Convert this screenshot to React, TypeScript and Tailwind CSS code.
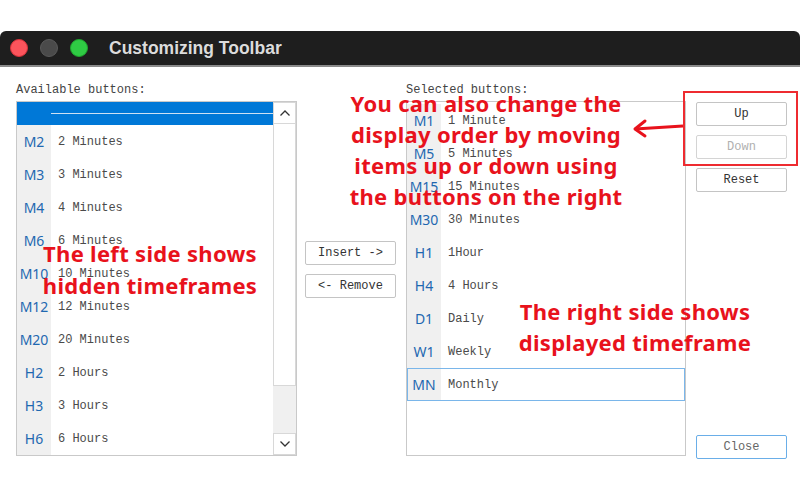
import React from "react";

type Item = { code: string; label: string };

const available: Item[] = [
  { code: "M2", label: "2 Minutes" },
  { code: "M3", label: "3 Minutes" },
  { code: "M4", label: "4 Minutes" },
  { code: "M6", label: "6 Minutes" },
  { code: "M10", label: "10 Minutes" },
  { code: "M12", label: "12 Minutes" },
  { code: "M20", label: "20 Minutes" },
  { code: "H2", label: "2 Hours" },
  { code: "H3", label: "3 Hours" },
  { code: "H6", label: "6 Hours" },
];

const selected: Item[] = [
  { code: "M1", label: "1 Minute" },
  { code: "M5", label: "5 Minutes" },
  { code: "M15", label: "15 Minutes" },
  { code: "M30", label: "30 Minutes" },
  { code: "H1", label: "1Hour" },
  { code: "H4", label: "4 Hours" },
  { code: "D1", label: "Daily" },
  { code: "W1", label: "Weekly" },
  { code: "MN", label: "Monthly" },
];

const mono = "font-['Liberation_Mono',monospace]";
const note =
  "absolute text-center text-[22px] font-bold text-[#e8121c] font-['Noto_Sans','Noto_Sans_CJK_JP',sans-serif] tracking-[0.3px]";

function Row({ item, focused }: { item: Item; focused?: boolean }) {
  return (
    <div
      className={`flex h-[33px] items-stretch ${
        focused ? "outline outline-1 -outline-offset-1 outline-[#7ab6ea]" : ""
      }`}
    >
      <div className="flex w-[34px] shrink-0 items-center justify-center bg-[#f0f0f0] text-[14px] text-[#1f68b0] font-['Noto_Sans',sans-serif]">
        {item.code}
      </div>
      <div className={`flex items-center pl-[7px] text-[12px] text-[#4a4a4a] ${mono}`}>
        {item.label}
      </div>
    </div>
  );
}

function Btn({
  children,
  disabled,
  primary,
}: {
  children: React.ReactNode;
  disabled?: boolean;
  primary?: boolean;
}) {
  return (
    <button
      className={`flex h-[24px] w-[91px] items-center justify-center rounded-[2px] border bg-white text-[12px] ${mono} ${
        primary
          ? "border-[#6aaee8] text-[#666]"
          : disabled
          ? "border-[#d4d4d4] text-[#b0b0b0]"
          : "border-[#c4c4c4] text-[#333]"
      }`}
    >
      {children}
    </button>
  );
}

function Chevron({ up }: { up?: boolean }) {
  return (
    <svg width="12" height="8" viewBox="0 0 12 8" fill="none">
      <path
        d={up ? "M1.5 6.5 6 2l4.5 4.5" : "M1.5 1.5 6 6l4.5-4.5"}
        stroke="#333"
        strokeWidth="1.3"
      />
    </svg>
  );
}

export default function App() {
  return (
    <div className="relative h-[500px] w-[800px] overflow-hidden bg-white">
      <div className="h-[31px]" />

      {/* title bar */}
      <div className="flex h-[36px] items-center rounded-t-[6px] border-b-2 border-[#8a8a8a] bg-[#1e1e1e] pl-[10px]">
        <div className="flex gap-[12px]">
          <span className="h-[18px] w-[18px] rounded-full border border-[#d8303a] bg-[#fc545c]" />
          <span className="h-[18px] w-[18px] rounded-full border border-[#5a5a5a] bg-[#4a4a4a]" />
          <span className="h-[18px] w-[18px] rounded-full border border-[#1ea52e] bg-[#2fcb44]" />
        </div>
        <span className="ml-[21px] text-[17.5px] font-bold text-[#dcdcdc] font-['Liberation_Sans',Arial,sans-serif]">
          Customizing Toolbar
        </span>
      </div>

      <div className="flex pl-4 pt-[16px]">
        {/* available list */}
        <div className="w-[281px]">
          <div className={`h-[18px] text-[12px] leading-[14px] text-[#444] ${mono}`}>
            Available buttons:
          </div>
          <div className="flex h-[355px] border border-[#c9c9c9]">
            <div className="flex-1 overflow-hidden">
              <div className="flex h-[23px] items-center bg-[#0078d7] pl-[34px]">
                <div className="h-px w-full bg-[#cfe1f3]" />
              </div>
              {available.map((it) => (
                <Row key={it.code} item={it} />
              ))}
            </div>
            <div className="flex w-[23px] flex-col bg-[#f0f0f0]">
              <div className="flex h-[22px] items-center justify-center border border-[#d8d8d8] bg-white">
                <Chevron up />
              </div>
              <div className="h-[262px] border-x border-b border-[#d8d8d8] bg-white" />
              <div className="flex-1" />
              <div className="flex h-[22px] items-center justify-center border border-[#d8d8d8] bg-white">
                <Chevron />
              </div>
            </div>
          </div>
        </div>

        {/* move buttons */}
        <div className="flex w-[109px] flex-col gap-[9px] pl-[8px] pt-[158px]">
          <Btn>Insert -&gt;</Btn>
          <Btn>&lt;- Remove</Btn>
        </div>

        {/* selected list */}
        <div className="w-[280px]">
          <div className={`h-[18px] text-[12px] leading-[14px] text-[#444] ${mono}`}>
            Selected buttons:
          </div>
          <div className="h-[355px] border border-[#c9c9c9] pt-[2px]">
            {selected.map((it) => (
              <Row key={it.code} item={it} focused={it.code === "MN"} />
            ))}
          </div>
        </div>

        {/* order buttons */}
        <div className="flex h-[376px] flex-col pl-[10px] pt-[19px]">
          <div className="flex flex-col gap-[9px]">
            <Btn>Up</Btn>
            <Btn disabled>Down</Btn>
            <Btn>Reset</Btn>
          </div>
          <div className="flex-1" />
          <Btn primary>Close</Btn>
        </div>
      </div>

      {/* callouts */}
      <div className="absolute left-[683px] top-[91px] h-[75px] w-[115px] border-2 border-[#ee2b30]" />
      <svg className="absolute left-[630px] top-[116px]" width="56" height="24" viewBox="0 0 56 24" fill="none">
        <path d="M53 10 5 13" stroke="#e8121c" strokeWidth="3" />
        <path d="M15 5 5 13l10 7" stroke="#e8121c" strokeWidth="3" strokeLinecap="round" strokeLinejoin="round" />
      </svg>

      <div className={`${note} left-[316px] top-[88px] w-[340px] leading-[31px]`}>
        You can also change the
        <br />
        display order by moving
        <br />
        items up or down using
        <br />
        the buttons on the right
      </div>
      <div className={`${note} left-0 top-[237px] w-[300px] leading-[32px]`}>
        The left side shows
        <br />
        hidden timeframes
      </div>
      <div className={`${note} left-[485px] top-[296px] w-[300px] leading-[31px]`}>
        The right side shows
        <br />
        displayed timeframe
      </div>
    </div>
  );
}
